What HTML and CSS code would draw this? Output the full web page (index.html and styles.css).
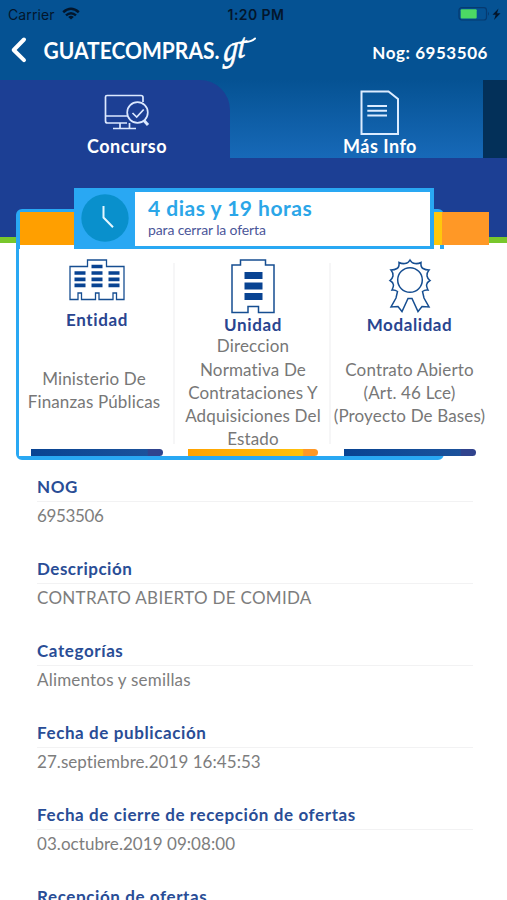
FILE: index.html
```html
<!DOCTYPE html>
<html lang="es">
<head>
<meta charset="utf-8">
<title>Guatecompras</title>
<link rel="stylesheet" href="styles.css">
</head>
<body>
<div class="screen">
  <header class="top">
    <div class="status">
      <span class="carrier">Carrier</span>
      <svg class="wifi" width="18" height="14" viewBox="0 0 18 14" fill="none" stroke="#03162c" stroke-width="2.5"><path d="M1.2 5.2Q9-1.6 16.8 5.2M4 8.4Q9 4 14 8.4"/><path d="M9 12.6 6.2 10Q9 7.6 11.8 10Z" fill="#03162c" stroke="none"/></svg>
      <span class="time">1:20 PM</span>
      <svg class="battery" width="44" height="16" viewBox="0 0 44 16"><rect x="1" y="1.7" width="27.5" height="12.3" rx="2.8" fill="none" stroke="#063a70" stroke-width="1.2"/><rect x="2.7" y="3.2" width="16" height="9.4" rx="1" fill="#4cd964"/><path d="M30 5.8q2 2 0 4z" fill="#063a70"/><path d="M40.5 2.500 34.500 8.800h3.200L36 14 42.500 7.300h-3.500z" fill="#03162c"/></svg>
    </div>
    <div class="nav">
      <svg class="back" width="16" height="26" viewBox="0 0 16 26" fill="none" stroke="#fff" stroke-width="4" stroke-linecap="round" stroke-linejoin="round"><path d="M13 2.500 2.700 13 13 23.200"/></svg>
      <svg class="brand" width="216" height="40" viewBox="0 0 216 40" fill="#fff"><text class="brand-main" x="0.500" y="28" textLength="176" lengthAdjust="spacingAndGlyphs">GUATECOMPRAS.</text><text class="brand-gt" transform="translate(180 31) rotate(-14) skewX(-18)" x="0" y="0" textLength="23" lengthAdjust="spacingAndGlyphs">gt</text><path d="M190 13.500Q196 11 202 11T212 7.500" fill="none" stroke="#fff" stroke-width="2" stroke-linecap="round"/></svg>
      <span class="nog">Nog: 6953506</span>
    </div>
  </header>
  <nav class="tabs">
    <div class="tab active">
      <svg width="46" height="38" viewBox="0 0 46 38" fill="none" stroke="#dce9ff" stroke-width="1.700"><path d="M23 29H3.500Q1.500 29 1.500 27V3Q1.500 1.500 3 1.500H37Q39 1.500 39 3.500V8M1.500 22H24M16 29v5M25.500 29v5M9 34.500h23"/><circle cx="33.500" cy="18.500" r="10.300"/><path d="m28.500 19 4.200 4 7-7.500"/><path d="m40 26.500 4 4.500" stroke-width="3"/></svg>
      <span class="tab-label">Concurso</span>
    </div>
    <div class="tab info">
      <svg width="40" height="46" viewBox="0 0 40 46" fill="none" stroke="#dcecff" stroke-width="2"><path d="M1.500 1.500H28.500L38 9v35H1.500z"/><path d="M7.300 16H27M7.300 20.700H27M7.300 25.500H27"/></svg>
      <span class="tab-label">Más Info</span>
    </div>
    <div class="tab-next"></div>
  </nav>
  <div class="band"></div>

  <section class="card">
    <div class="strip"><div class="strip-end"></div></div>
    <div class="countdown">
      <div class="clock"><svg width="48" height="48" viewBox="0 0 48 48" fill="none"><circle cx="24" cy="24" r="23.700" fill="#0990cc"/><path d="M22.500 12v11.500l9.500 9.800" stroke="#e4f7ff" stroke-width="2"/></svg></div>
      <div class="remaining"><strong class="left">4 dias y 19 horas</strong><span class="until">para cerrar la oferta</span></div>
    </div>
    <div class="cols">
      <article class="col entity">
        <svg class="icon" width="56" height="42" viewBox="0 0 56 42" fill="none" stroke="#164e91" stroke-width="1.300"><path d="M1 40.500V7.500H18.500V1H37.500V7.500H55V40.500H47.500V34H44V40.500H30V34H26.500V40.500H12.500V34H9V40.500Z"/><path d="M5.500 14h11M5.500 20.300h11M5.500 26.300h11M22.500 7.500h11M22.500 14h11M22.500 20.300h11M22.500 26.300h11M39.500 14h11M39.500 20.300h11M39.500 26.300h11" stroke="#084392" stroke-width="3.700"/></svg>
        <h2>Entidad</h2>
        <p><span>Ministerio De</span><span>Finanzas Públicas</span></p>
        <i class="bar"></i>
      </article>
      <article class="col unit">
        <svg class="icon" width="44" height="55" viewBox="0 0 44 55" fill="none" stroke="#164e91" stroke-width="1.500"><path d="M1 53.500V6H9.500V1H34.500V6H43V53.500H27.500V47.500H17V53.500Z"/><path d="M13.500 16.500h18M13.500 27h18M13.500 37.500h18" stroke="#084392" stroke-width="7"/></svg>
        <h2>Unidad</h2>
        <p><span>Direccion</span><span>Normativa De</span><span>Contrataciones Y</span><span>Adquisiciones Del</span><span>Estado</span></p>
        <i class="bar gold"></i>
      </article>
      <article class="col mode">
        <svg class="icon" width="42" height="55" viewBox="0 0 42 55" fill="none" stroke="#164e91" stroke-width="1.500"><path d="M21 1 Q23 4.500 26 4.500Q29 5 32 3.500Q31.500 8 34 9.500Q36.500 11 40 11Q37.500 14 38 17Q38.500 19.500 41 21.500Q38 23 37.500 26Q37.500 28 39 31Q36 30.500 33.500 32.500L35 39 40 48 33 47.500 29 52.500 23 39.500H19L13 52.500 9 47.500 2 48 7 39 8.500 32.500Q6 30.500 3 31Q4.500 28 4.500 26Q4 23 1 21.500Q3.500 19.500 4 17Q4.500 14 2 11Q5.500 11 8 9.500Q10.500 8 10 3.500Q13 5 16 4.500Q19 4.500 21 1Z"/><circle cx="21" cy="21" r="12.300"/></svg>
        <h2>Modalidad</h2>
        <p><span>Contrato Abierto</span><span>(Art. 46 Lce)</span><span>(Proyecto De Bases)</span></p>
        <i class="bar"></i>
      </article>
    </div>
  </section>

  <dl class="details">
    <div><dt>NOG</dt><dd class="digits">6953506</dd></div>
    <div><dt class="snug">Descripción</dt><dd class="caps">CONTRATO ABIERTO DE COMIDA</dd></div>
    <div><dt>Categorías</dt><dd class="words">Alimentos y semillas</dd></div>
    <div><dt>Fecha de publicación</dt><dd>27.septiembre.2019 16:45:53</dd></div>
    <div><dt>Fecha de cierre de recepción de ofertas</dt><dd>03.octubre.2019 09:08:00</dd></div>
    <div><dt>Recepción de ofertas</dt></div>
  </dl>
</div>
</body>
</html>
```
FILE: styles.css
```css
* { box-sizing: border-box; margin: 0; padding: 0; }
body { background: #fff; font-family: Lato, "Liberation Sans", sans-serif; font-variant-ligatures: none; }
.screen { width: 507px; height: 900px; overflow: hidden; }
svg { display: block; overflow: visible; }

.top { height: 80px; background: #055293; }
.status { height: 28px; display: flex; align-items: center; padding: 0 5px 0 8px; color: #03162c; font-family: Inter, sans-serif; font-size: 14px; }
.carrier { letter-spacing: 0.1px; }
.wifi { margin-left: 7px; }
.time { margin-left: 148px; font-weight: 600; font-size: 14px; letter-spacing: 0.4px; }
.battery { margin-left: auto; }
.nav { height: 52px; display: flex; align-items: center; padding: 0 19px 0 11px; }
.back { margin-top: -8px; }
.brand { margin: -6px 0 0 16px; }
.brand-main { font: 700 23px Lato, sans-serif; }
.brand-gt { font: italic 400 33px "Liberation Serif", serif; stroke: #fff; stroke-width: 0.7px; }
.nog { margin: -4px 0 0 auto; color: #fff; font-size: 17px; font-weight: 700; letter-spacing: 0.55px; }

.tabs { height: 78px; display: flex; background: linear-gradient(#055293, #1769b8); }
.tab { display: flex; flex-direction: column; align-items: center; color: #fff; }
.active { width: 230px; background: #1c3f94; border-top-right-radius: 30px; padding: 14px 0 0 24px; }
.info { width: 253px; padding: 10px 0 0 47px; }
.tab-next { width: 24px; background: #033059; }
.tab-label { font-size: 18px; line-height: 22px; font-weight: 700; margin-top: 3px; letter-spacing: 0.5px; }
.info .tab-label { margin-top: -1px; }
.band { height: 85px; background: #1c3f94; border-bottom: 6px solid #78c72c; }

.card { position: relative; width: 428px; height: 251px; margin: -34px 0 0 16px; border: 4px solid #29a8f3; border-radius: 6px; background: #fff; }
.strip { position: absolute; left: 0; top: -1px; width: 469px; height: 33px; background: linear-gradient(90deg, #ff9f00 0 40%, #ffc80c 90%); display: flex; justify-content: flex-end; }
.strip-end { width: 47px; background: #ff9826; }
.countdown { position: absolute; left: 54px; top: -25px; width: 360px; height: 61px; display: flex; background: #29a8f3; padding: 4px 4px 3px 0; z-index: 2; }
.clock { width: 61px; padding: 2px 0 0 7px; }
.remaining { flex: 1; background: #fff; padding: 3px 0 0 13px; display: flex; flex-direction: column; }
.left { color: #2ba6e8; font-size: 21px; line-height: 26px; letter-spacing: 0.5px; }
.until { color: #4b5699; font-size: 14px; line-height: 17px; letter-spacing: -0.13px; }

.cols { position: relative; display: grid; grid-template: 207px / 156px 156px 157px; width: 469px; height: 207px; margin: 36px 0 0 -1px; background: #fff; }
.col { position: relative; display: flex; flex-direction: column; align-items: center; padding-top: 10px; }
.col:not(:last-child)::after { content: ""; position: absolute; right: 0; top: 14px; height: 181px; width: 2px; background: #f6f6f7; }
.col h2 { color: #294590; font-size: 17px; line-height: 22px; font-weight: 700; letter-spacing: 0.6px; }
.entity h2 { margin-top: 8px; }
.col p { flex: 1; min-height: 0; display: flex; flex-direction: column; justify-content: center; text-align: center; white-space: nowrap; color: #777; font-size: 17px; line-height: 23.3px; letter-spacing: 0.15px; }
.entity p { padding-right: 6px; }
.bar { width: 132px; height: 7px; align-self: flex-start; margin-left: 13px; border-radius: 0 4px 4px 0; background: linear-gradient(90deg, #084392, #1b529b 88%, #30438d 89%); }
.entity .bar { margin-left: 12px; }
.gold { width: 130px; background: linear-gradient(90deg, #ffa200, #ffc10b 88%, #ff9826 89%); }

.details { padding: 15px 34px 0 37px; }
.details div { height: 82px; }
.details dt { height: 27px; color: #294d96; font-size: 17px; line-height: 24px; font-weight: 700; border-bottom: 1px solid #f2f2f3; letter-spacing: 0.6px; }
.details .snug { letter-spacing: 0.5px; }
.details dd { color: #7d7d7d; font-size: 17px; line-height: 28px; letter-spacing: 0.05px; }
.details .digits { letter-spacing: -0.35px; }
.details .caps { letter-spacing: 0.3px; }
.details .words { letter-spacing: 0.2px; }
```
